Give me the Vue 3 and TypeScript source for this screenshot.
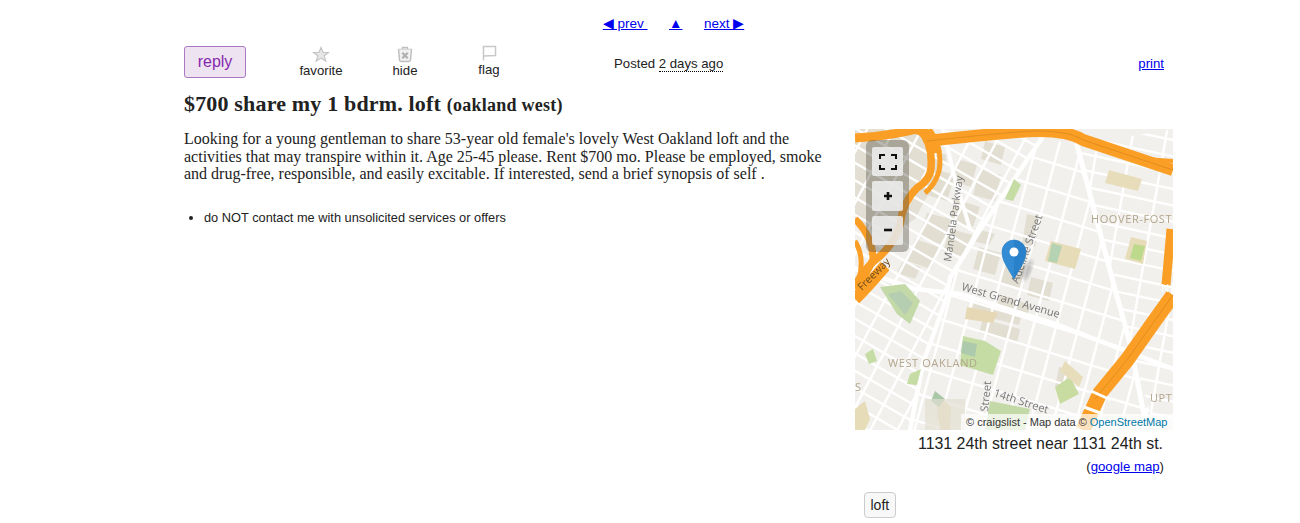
<script setup lang="ts">
type Seg = { x1: number; y1: number; x2: number; y2: number }

function family(angle: number, spacing: number, phase: number): Seg[] {
  const r = (angle * Math.PI) / 180
  const dx = Math.cos(r)
  const dy = Math.sin(r)
  const out: Seg[] = []
  for (let d = -700 + phase; d < 700; d += spacing) {
    const cx = 159 - dy * d
    const cy = 150 + dx * d
    out.push({ x1: cx - dx * 600, y1: cy - dy * 600, x2: cx + dx * 600, y2: cy + dy * 600 })
  }
  return out
}

const centerStreets = [...family(17, 26, 6), ...family(105, 22, 9)]
const leftStreets = [...family(30, 15, 4), ...family(118, 24, 12)]
const rightStreets = [...family(12, 16, 3), ...family(100, 33, 14)]

const beige = [
  '79,40 100,46 92,72 72,66', '100,70 125,78 118,98 94,92', '72,84 96,90 88,116 64,108',
  '124,118 146,124 140,146 118,140', '150,128 172,134 166,160 144,154', '103,30 122,36 116,58 97,52',
  '176,148 198,154 194,172 172,166', '120,170 168,182 164,196 116,184', '10,0 60,0 74,40 42,70 0,60',
  '128,190 165,200 162,214 124,204', '172,85 185,88 180,118 167,115', '204,238 222,244 216,262 200,258',
  '70,20 92,26 84,44 62,38', '125,40 146,46 140,72 118,66', '95,100 118,106 110,128 88,122',
  '60,110 84,118 76,140 52,132', '130,12 150,18 146,36 126,30', '122,100 140,105 134,116 118,112',
  '146,166 176,176 172,186 142,176', '48,132 66,138 60,150 42,144'
]
</script>

<template>
  <div class="page">
    <nav class="pager">
      <a href="#">◀ prev </a>
      <a href="#">▲</a>
      <a href="#">next ▶</a>
    </nav>

    <div class="toolbar">
      <button class="reply">reply</button>
      <div class="actions">
        <div class="action">
          <svg width="18" height="17" viewBox="0 0 18 17">
            <path d="M9 1.500l2.100 5h5.400l-4.300 3.300 1.600 5.400L9 12.100l-4.800 3.100 1.600-5.400L1.500 6.500h5.400z" fill="#e6e6e6" stroke="#c4c4c4" stroke-width="1.200" />
          </svg>
          <span>favorite</span>
        </div>
        <div class="action">
          <svg width="18" height="17" viewBox="0 0 18 17">
            <path d="M2 3.500h14M6.500 3.500V1.500h5v2" fill="none" stroke="#c0c0c0" stroke-width="1.300" />
            <path d="M2.500 3.500l1 10.500q.2 1.500 1.500 1.500h8q1.300 0 1.500-1.500l1-10.500" fill="#f1f1f1" stroke="#c0c0c0" stroke-width="1.500" />
            <path d="M6.300 6.800l5.400 5.400M11.700 6.800l-5.400 5.400" stroke="#b0b0b0" stroke-width="2.200" />
          </svg>
          <span>hide</span>
        </div>
        <div class="action flag">
          <svg width="18" height="17" viewBox="0 0 18 17">
            <path d="M3.500 15.500V1.500H15.500V10.500L3.500 11" fill="none" stroke="#c8c8c8" stroke-width="1.500" />
          </svg>
          <span>flag</span>
        </div>
      </div>
      <div class="posted">Posted <span class="ago">2 days ago</span></div>
      <a class="print" href="#">print</a>
    </div>

    <h1 class="title">$700 share my 1 bdrm. loft <small>(oakland west)</small></h1>

    <div class="content">
      <div class="body-col">
        <p class="desc">Looking for a young gentleman to share 53-year old female's lovely West Oakland loft and the activities that may transpire within it. Age 25-45 please. Rent $700 mo. Please be employed, smoke and drug-free, responsible, and easily excitable. If interested, send a brief synopsis of self .</p>
        <ul class="notices">
          <li>do NOT contact me with unsolicited services or offers</li>
        </ul>
      </div>

      <aside class="side">
        <div class="map">
          <svg class="map-art" width="318" height="301" viewBox="0 0 318 301">
            <defs>
              <clipPath id="reg-left"><polygon points="0,0 75,0 187,9 128,96 95,149 92,168 68,234 55,301 0,301" /></clipPath>
              <clipPath id="reg-center"><polygon points="187,9 222,16 258,153 275,214 300,301 55,301 68,234 92,168 95,149 128,96" /></clipPath>
              <clipPath id="reg-right"><polygon points="222,16 318,0 318,301 300,301 275,214 258,153" /></clipPath>
              <filter id="pin-shadow"><feGaussianBlur stdDeviation="2" /></filter>
            </defs>
            <rect width="318" height="301" fill="#f2f0ed" />
            <polygon points="0,0 60,0 92,30 60,90 30,110 0,90" fill="#e3dfd5" />
            <polygon v-for="(p, i) in beige" :key="i" :points="p" fill="#e2ded2" />

            <g clip-path="url(#reg-left)" stroke="#fff" stroke-width="2.400">
              <line v-for="(s, i) in leftStreets" :key="i" :x1="s.x1" :y1="s.y1" :x2="s.x2" :y2="s.y2" />
            </g>
            <g clip-path="url(#reg-center)" stroke="#fff" stroke-width="2.400">
              <line v-for="(s, i) in centerStreets" :key="i" :x1="s.x1" :y1="s.y1" :x2="s.x2" :y2="s.y2" />
            </g>
            <g clip-path="url(#reg-right)" stroke="#fff" stroke-width="2.400">
              <line v-for="(s, i) in rightStreets" :key="i" :x1="s.x1" :y1="s.y1" :x2="s.x2" :y2="s.y2" />
            </g>

            <g fill="none" stroke="#fff" stroke-linecap="round">
              <path d="M187 9L128 96 95 149 92 168 68 234 55 301" stroke-width="4.500" />
              <path d="M222 16L258 153 275 214 292 301" stroke-width="5" />
              <path d="M0 140L60 160 105 165 200 195 318 240" stroke-width="4.500" />
              <path d="M88 0L100 50 115 100" stroke-width="4" />
            </g>

            <!-- parks and sand -->
            <polygon points="25,158 50,155 65,172 55,195 42,185" fill="#c3d9a8" />
            <polygon points="33,165 46,162 58,174 50,186" fill="#b5cdb0" />
            <polygon points="108,207 130,212 146,222 138,246 105,236" fill="#c5dca5" />
            <polygon points="108,212 122,215 120,228 106,224" fill="#aecaac" />
            <polygon points="112,178 143,184 138,194 110,190" fill="#e6d8b5" />
            <polygon points="196,112 226,120 220,140 190,132" fill="#e7dcb8" />
            <polygon points="197,114 207,117 202,134 193,132" fill="#b5d2b2" />
            <polygon points="254,41 287,50 283,62 250,54" fill="#e8ddba" />
            <polygon points="276,108 292,112 288,135 270,130" fill="#e7dcb8" />
            <polygon points="279,115 290,117 286,132 275,129" fill="#bcd98c" />
            <polygon points="159,50 166,56 158,72 150,70" fill="#c5dca5" />
            <polygon points="215,248 224,265 205,275 200,258" fill="#c8dca2" />
            <polygon points="210,232 228,248 224,258 205,242" fill="#e8ddba" />
            <polygon points="135,272 175,280 170,301 130,301" fill="#c3d9a8" />
            <polygon points="80,262 96,278 95,301 85,301" fill="#e7dcb8" />
            <polygon points="80,262 90,270 84,278 76,272" fill="#a9c8a8" />
            <polygon points="0,280 10,272 15,290 10,301 0,301" fill="#e7dcb8" />
            <polygon points="10,225 18,220 22,232 14,235" fill="#c5dca5" />
            <polygon points="55,245 66,240 62,256 52,255" fill="#c5dca5" />
            <rect x="70" y="270" width="40" height="31" fill="#e2ded2" opacity=".7" />

            <!-- highways -->
            <g fill="none" stroke="#fa9e25" stroke-linecap="butt" stroke-linejoin="round">
              <path d="M72 12Q115 7 162 3T228 11L318 41" stroke-width="12" />
              <path d="M290 30L318 32" stroke-width="4" />
              <path d="M0 9Q40 7 72 -3" stroke-width="9" />
              <path d="M60 0Q84 8 80 24" stroke-width="9" />
              <path d="M64 0Q78 14 76 38Q76 50 62 59Q48 72 45 96Q38 118 18 133Q6 144 1 156" stroke-width="7.500" />
              <path d="M74 0Q88 16 84 42Q80 56 70 64" stroke-width="5" />
              <path d="M0 90Q18 108 18 130Q12 146 0 160" stroke-width="7" />
              <path d="M0 112Q10 128 4 150" stroke-width="5" />
              <path d="M228 301L245 264 272 231 298 194 318 166" stroke-width="15" />
              <path d="M316 100L311 156" stroke-width="9" />
              <path d="M0 170Q12 158 30 137" stroke-width="12" />
            </g>
            <g fill="none" stroke="#b56f14" stroke-width=".600" opacity=".6">
              <path d="M72 12Q115 7 162 3T228 11L318 41" />
              <path d="M240 270L272 231 298 194 318 166" />
            </g>
            <path d="M236 262L256 271M229 278L248 285" stroke="#fff" stroke-width="3" fill="none" />

            <!-- labels -->
            <text class="road man" transform="translate(96 133) rotate(-82)">Mandela Parkway</text>
            <text class="road" transform="translate(163 155) rotate(-70)">Adeline Street</text>
            <text class="road" transform="translate(106 161) rotate(16)">West Grand Avenue</text>
            <text class="road" transform="translate(138 267) rotate(18)">14th Street</text>
            <text class="road" transform="translate(133 283) rotate(-84)">Street</text>
            <text class="road hw" transform="translate(7 162) rotate(-45)">Freeway</text>
            <text class="place" x="236" y="94">HOOVER-FOST</text>
            <text class="place" x="33" y="238">WEST OAKLAND</text>
            <text class="place" x="295" y="273">UPT</text>
            <text class="place" x="0" y="262">S</text>
            <text class="place white" x="306" y="163">N</text>

            <!-- marker -->
            <ellipse cx="172" cy="141" rx="4" ry="11" fill="#000" opacity=".22" filter="url(#pin-shadow)" transform="rotate(20 172 141)" />
            <path d="M159 150C153 139 147 132 147 123A12 12 0 0 1 171 123C171 132 165 139 159 150Z" fill="#2a81cb" stroke="#2478b8" stroke-width=".600" />
            <path d="M159 150C153 139 147 132 147 123A12 12 0 0 1 159 111Z" fill="#3a93d8" opacity=".6" />
            <circle cx="159" cy="123" r="4.500" fill="#fff" />
          </svg>

          <div class="controls">
            <button class="ctl">
              <svg width="18" height="16" viewBox="0 0 18 16">
                <path d="M1 5V1h5M12 1h5v4M17 11v4h-5M6 15H1v-4" fill="none" stroke="#111" stroke-width="2" />
              </svg>
            </button>
            <button class="ctl">
              <svg width="12" height="12" viewBox="0 0 12 12"><path d="M6 2v8M2 6h8" stroke="#111" stroke-width="2.600" /></svg>
            </button>
            <button class="ctl">
              <svg width="12" height="12" viewBox="0 0 12 12"><path d="M2 6h8" stroke="#111" stroke-width="2.600" /></svg>
            </button>
          </div>

          <div class="attribution">© craigslist - Map data © <span>OpenStreetMap</span></div>
        </div>
        <div class="address">1131 24th street near 1131 24th st.</div>
        <div class="gmap">(<a href="#">google map</a>)</div>
        <div class="tags"><span class="tag">loft</span></div>
      </aside>
    </div>
  </div>
</template>

<style>
html, body { margin: 0; background: #fff; }
</style>

<style scoped>
.page {
  width: 989px;
  margin-left: 184px;
  font-family: "Liberation Sans", Arial, sans-serif;
  color: #222;
  font-size: 13.200px;
}
a { color: #00e; }
.pager {
  display: flex;
  justify-content: center;
  gap: 21.500px;
  padding: 17px 10px 0 0;
  font-size: 13.500px;
  line-height: 14px;
}
.pager a { white-space: pre; }
.toolbar {
  display: flex;
  align-items: flex-start;
  margin-top: 15px;
  height: 32px;
}
.reply {
  width: 62px;
  height: 32px;
  box-sizing: border-box;
  border: 1px solid #ab79c4;
  border-radius: 3px;
  background: #eee3f1;
  color: #8529ad;
  font: 16px "Liberation Sans", Arial, sans-serif;
  padding: 0;
}
.actions { display: flex; margin-left: 33px; }
.action {
  width: 84px;
  display: flex;
  flex-direction: column;
  align-items: center;
  line-height: 14px;
}
.action svg { display: block; margin-bottom: 1px; }
.action.flag { margin-top: -1px; }
.posted { margin-left: 83px; padding-top: 10px; line-height: 15px; }
.ago { border-bottom: 1px dotted #000; }
.print { margin-left: auto; margin-right: 9px; padding-top: 10px; line-height: 15px; }
.title {
  margin: 13px 0 0;
  font: bold 22px/26px "Liberation Serif", "Times New Roman", serif;
  letter-spacing: .17px;
  color: #222;
}
.title small { font-size: 18px; letter-spacing: .25px; }
.content { display: flex; justify-content: space-between; margin-top: 11px; }
.body-col { width: 645px; padding-top: 1px; }
.desc {
  margin: 0;
  font: 16px/17.500px "Liberation Serif", "Times New Roman", serif;
  color: #222;
}
.notices { margin: 27px 0 0; padding-left: 20px; font-size: 12.800px; line-height: 15px; }
.side { width: 318px; flex: none; }
.map { position: relative; width: 318px; height: 301px; overflow: hidden; }
.map-art { display: block; filter: blur(.3px); }
.road { font: 11px "Open Sans", sans-serif; fill: #777; }
.road.man { font-size: 10.500px; }
.road.hw { fill: #6b4a1a; font-size: 10.500px; }
.place { font: 11px "Open Sans", sans-serif; fill: #b3a68c; letter-spacing: .6px; }
.place.white { fill: #fff; }
.controls {
  position: absolute;
  left: 11px;
  top: 11px;
  width: 43px;
  height: 112px;
  box-sizing: border-box;
  padding: 7px 6px;
  border-radius: 6px;
  background: rgba(90, 88, 75, .42);
  display: flex;
  flex-direction: column;
  gap: 5px;
}
.ctl {
  width: 31px;
  height: 30px;
  padding: 0;
  border: 0;
  border-radius: 2px;
  background: rgba(240, 240, 240, .85);
  display: flex;
  align-items: center;
  justify-content: center;
}
.attribution {
  position: absolute;
  right: 0;
  bottom: 0;
  height: 16px;
  width: 212px;
  box-sizing: border-box;
  padding-left: 5px;
  background: rgba(255, 255, 255, .7);
  font-size: 11px;
  line-height: 16px;
  color: #333;
  white-space: nowrap;
}
.attribution span { color: #0078a8; }
.address { text-align: right; padding-right: 10px; margin-top: 5px; font-size: 15.900px; line-height: 18px; }
.gmap { text-align: right; padding-right: 9px; margin-top: 6px; line-height: 16px; }
.tags { margin-top: 17px; padding-left: 9px; }
.tag {
  display: inline-block;
  box-sizing: border-box;
  height: 26px;
  padding: 0 5.500px;
  border: 1px solid #ccc;
  border-radius: 4px;
  background: #f8f8f8;
  font-size: 14px;
  line-height: 24px;
}
</style>
